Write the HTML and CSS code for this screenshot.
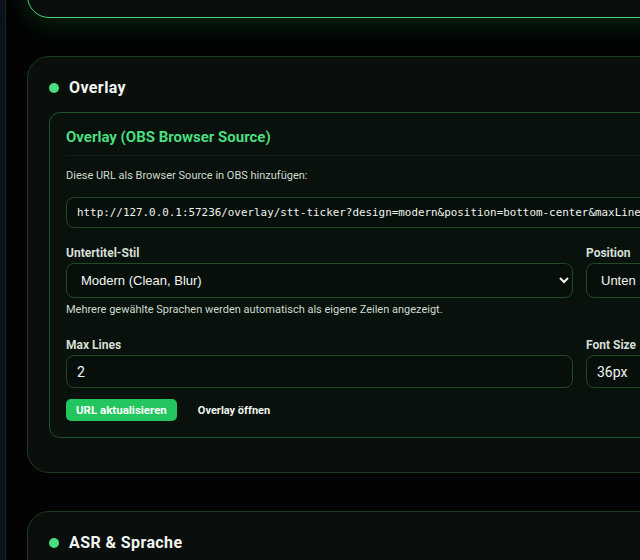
FILE: index.html
```html
<!DOCTYPE html>
<html>
<head>
    <title>STT Ticker - Einstellungen</title>
    <link rel="stylesheet" href="styles.css">
</head>
<body>
    <aside class="rail"></aside>

    <main class="content">
        <section class="card card-active"></section>

        <section class="card">
            <h2 class="card-title"><span class="dot"></span>Overlay</h2>

            <div class="panel">
                <h3 class="panel-title">Overlay (OBS Browser Source)</h3>
                <p class="hint hint-top">Diese URL als Browser Source in OBS hinzufügen:</p>
                <div class="url-box">http://127.0.0.1:57236/overlay/stt-ticker?design=modern&amp;position=bottom-center&amp;maxLines=2&amp;fontSize=36</div>

                <div class="row">
                    <div class="field">
                        <label for="design">Untertitel-Stil</label>
                        <select id="design">
                            <option>Modern (Clean, Blur)</option>
                            <option>Klassisch</option>
                        </select>
                        <p class="hint">Mehrere gewählte Sprachen werden automatisch als eigene Zeilen angezeigt.</p>
                    </div>
                    <div class="field">
                        <label for="position">Position</label>
                        <select id="position">
                            <option>Unten Mitte</option>
                            <option>Oben Mitte</option>
                        </select>
                    </div>
                </div>

                <div class="row row-second">
                    <div class="field">
                        <label for="maxLines">Max Lines</label>
                        <input type="text" id="maxLines" value="2">
                    </div>
                    <div class="field">
                        <label for="fontSize">Font Size</label>
                        <input type="text" id="fontSize" value="36px">
                    </div>
                </div>

                <div class="actions">
                    <button class="btn-primary">URL aktualisieren</button>
                    <button class="btn-link">Overlay öffnen</button>
                </div>
            </div>
        </section>

        <section class="card">
            <h2 class="card-title"><span class="dot"></span>ASR &amp; Sprache</h2>
        </section>
    </main>
</body>
</html>
```

FILE: styles.css
```css
/* dark green settings theme */
html, body {
    margin: 0;
    height: 100%;
}
body {
    display: flex;
    overflow: hidden;
    background: #020302;
    color: #d3ddd4;
    font-family: Roboto, "Noto Sans", sans-serif;
}
.rail {
    flex: 0 0 5px;
    background: #0b111d;
    border-right: 1px solid #10281a;
}
.content {
    flex: 0 0 852px;
    padding: 0 0 0 21px;
}
.card {
    box-sizing: border-box;
    width: 852px;
    margin-bottom: 38px;
    padding: 21px 21px 34px;
    background: #0a0f0c;
    border: 1px solid #1b3a22;
    border-radius: 22px;
}
.card-active {
    height: 98px;
    margin-top: -80px;
    border-color: #4ad27c;
    box-shadow: 0 6px 28px rgba(34, 197, 94, 0.18);
}
.card-title {
    display: flex;
    align-items: center;
    gap: 10px;
    margin: 0 0 14px;
    font-size: 16px;
    line-height: 20px;
    font-weight: 700;
    color: #f2f6f3;
    letter-spacing: 0.4px;
}
.dot {
    width: 10px;
    height: 10px;
    border-radius: 50%;
    background: #4ade80;
}
.panel {
    padding: 14px 16px 16px;
    background: #08110b;
    border: 1px solid #1e5229;
    border-radius: 11px;
}
.panel-title {
    margin: 0 0 12px;
    padding-bottom: 8px;
    border-bottom: 1px solid #0f1f14;
    font-size: 15px;
    line-height: 20px;
    font-weight: 700;
    color: #4ade80;
}
.hint {
    margin: 4px 0 0;
    font-size: 11px;
    line-height: 16px;
    color: #cfdacf;
}
.hint-top {
    margin: 0;
}
.url-box {
    box-sizing: border-box;
    height: 31px;
    margin-top: 13px;
    padding: 0 10px;
    border: 1px solid #1e4a27;
    border-radius: 8px;
    background: #070f0a;
    font-family: "DejaVu Sans Mono", "Liberation Mono", monospace;
    font-size: 10.9px;
    line-height: 29px;
    color: #eef3ef;
    white-space: nowrap;
    overflow: hidden;
}
.row {
    display: grid;
    grid-template-columns: 507px 1fr;
    gap: 13px;
    margin-top: 18px;
}
.row-second {
    margin-top: 20px;
}
.field label {
    display: block;
    margin-bottom: 3px;
    font-size: 12px;
    line-height: 14px;
    font-weight: 700;
    color: #d5dfd5;
}
select,
input[type="text"] {
    box-sizing: border-box;
    display: block;
    width: 100%;
    border: 1px solid #1e4a27;
    border-radius: 8px;
    background: #070f0a;
    color: #f2f6f3;
    color-scheme: dark;
    outline: none;
}
select {
    height: 35px;
    padding: 0 10px;
    font-family: "Liberation Sans", Arial, sans-serif;
    font-size: 13px;
}
input[type="text"] {
    height: 33px;
    padding: 0 10px;
    font-family: Roboto, sans-serif;
    font-size: 14px;
}
.actions {
    display: flex;
    align-items: center;
    gap: 21px;
    margin-top: 11px;
}
.btn-primary {
    height: 22px;
    padding: 0 10px;
    border: none;
    border-radius: 5px;
    background: #22c55e;
    color: #ffffff;
    font-family: Roboto, sans-serif;
    font-size: 11.5px;
    font-weight: 700;
    cursor: pointer;
}
.btn-link {
    padding: 0;
    border: none;
    background: none;
    color: #eef3ef;
    font-family: Roboto, sans-serif;
    font-size: 11px;
    font-weight: 700;
    cursor: pointer;
}
```
